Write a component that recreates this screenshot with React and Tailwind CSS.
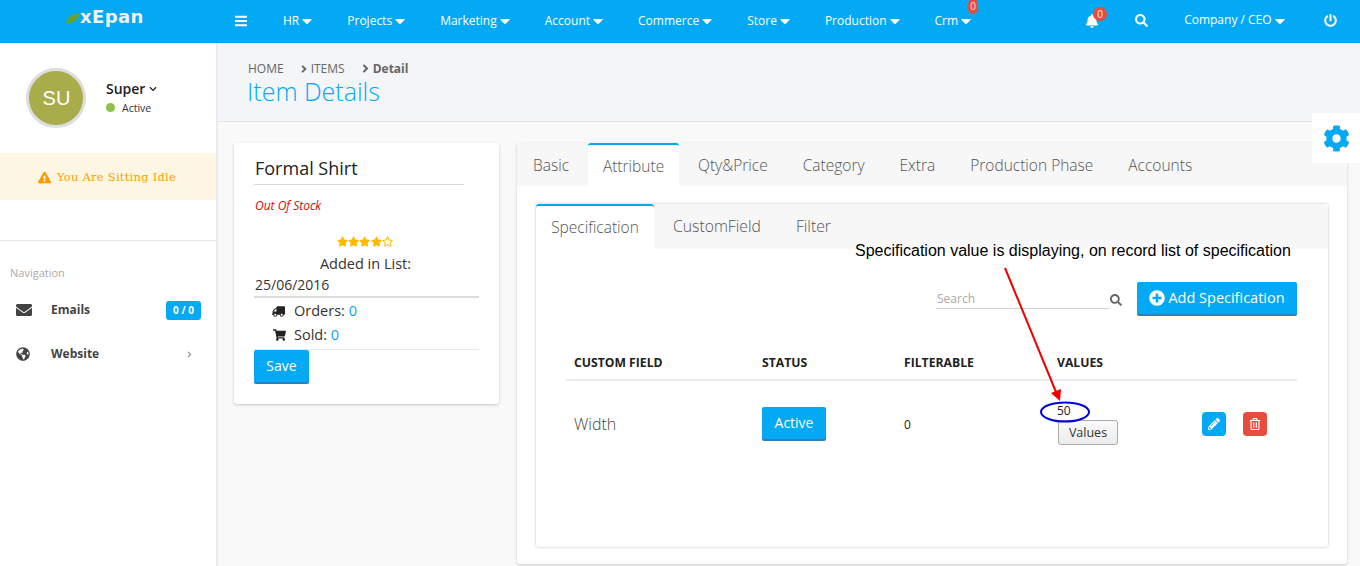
import React from 'react';
import {
  FaBars, FaCaretDown, FaBell, FaSearch, FaPowerOff, FaCog, FaExclamationTriangle,
  FaEnvelope, FaGlobeAmericas, FaTruck, FaShoppingCart, FaPencilAlt, FaRegTrashAlt,
  FaPlusCircle, FaStar, FaRegStar, FaChevronDown, FaChevronRight, FaAngleRight,
} from 'react-icons/fa';

const NAV = ['HR', 'Projects', 'Marketing', 'Account', 'Commerce', 'Store', 'Production'];
const TABS = ['Basic', 'Attribute', 'Qty&Price', 'Category', 'Extra', 'Production Phase', 'Accounts'];
const SUB_TABS = ['Specification', 'CustomField', 'Filter'];

function NavItem({ label, badge }) {
  return (
    <div className="relative flex items-center gap-[3px]">
      <span>{label}</span>
      <FaCaretDown className="text-[16px] w-[10px] shrink-0" />
      {badge && (
        <span className="absolute -top-[13px] -right-[7px] w-[10px] h-[15px] rounded-[5px] bg-[#e74c3c] text-[10px] leading-[15px] text-center text-white/80">
          {badge}
        </span>
      )}
    </div>
  );
}

function Header() {
  return (
    <header className="h-[43px] pb-[2px] bg-[#03a9f4] text-white flex items-center text-[12px] shrink-0">
      <div className="w-[235px] pl-[66px] flex items-center shrink-0 -mt-[8px]">
        <svg width="14" height="11" viewBox="0 0 14 11" className="mt-[4px]">
          <path d="M0 11 C1 4 6 1 14 0 C13 6 8 10 0 11 Z" fill="#6aa32b" />
        </svg>
        <span className="text-[18px] font-bold tracking-[0.4px] text-[#f1f1f1] font-['DejaVu_Sans',sans-serif] leading-none">xEpan</span>
      </div>
      <FaBars className="text-[14px] w-[12px] mr-[36px] shrink-0" />
      <div className="flex items-center gap-[35px]">
        {NAV.map((n) => <NavItem key={n} label={n} />)}
        <NavItem label="Crm" badge="0" />
      </div>
      <div className="relative ml-[114px] shrink-0">
        <FaBell className="text-[14px]" />
        <span className="absolute -top-[7px] -right-[8px] w-[14px] h-[14px] rounded-full bg-[#e74c3c] text-[10px] leading-[14px] text-center text-white/90">0</span>
      </div>
      <FaSearch className="text-[13px] ml-[36px] shrink-0" />
      <span className="ml-[36px] -mt-[1px] whitespace-nowrap">Company / CEO</span>
      <FaCaretDown className="text-[16px] w-[10px] ml-[3px] shrink-0" />
      <FaPowerOff className="text-[13px] ml-[39px] shrink-0" />
    </header>
  );
}

function Sidebar() {
  return (
    <aside className="w-[218px] shrink-0 bg-white border-r-2 border-[#e8ebf0] flex flex-col">
      <div className="flex items-center pl-[26px] h-[110px]">
        <div className="w-[60px] h-[60px] pl-[1px] rounded-full bg-[#a9ac4a] border-[3px] border-[#dddddd] flex items-center justify-center text-white text-[20px] font-['Liberation_Sans',sans-serif]">SU</div>
        <div className="ml-[20px] -mt-[3px]">
          <div className="flex items-center gap-[4px] text-[14px] font-semibold text-[#222] leading-[20px]">
            Super <FaChevronDown className="text-[8px] mt-[1px]" />
          </div>
          <div className="flex items-center gap-[7px] text-[10.5px] text-[#333] mt-[2px] leading-[14px]">
            <span className="w-[9px] h-[9px] rounded-full bg-[#8bc34a]" /> Active
          </div>
        </div>
      </div>
      <div className="h-[47px] pr-[2px] pt-[2px] bg-[#fdf6e3] flex items-center justify-center gap-[6px] text-[#ffa000] text-[11.5px] tracking-[0.25px] font-['DejaVu_Serif',serif]">
        <FaExclamationTriangle className="text-[#ff9800] text-[13px]" />
        <span>You Are Sitting Idle</span>
      </div>
      <div className="mt-[40px] border-t border-[#e9e9e9] pt-[24px] px-[10px]">
        <div className="text-[11px] leading-[16px] text-[#aaaaaa]">Navigation</div>
        <div className="mt-[19px] flex items-center h-[20px] text-[12px] font-bold text-[#444]">
          <FaEnvelope className="ml-[6px] text-[16px] w-[16px]" />
          <span className="ml-[19px]">Emails</span>
          <span className="ml-auto mr-[5px] w-[35px] h-[19px] rounded-[3px] bg-[#03a9f4] text-white text-[10px] leading-[19px] text-center">0 / 0</span>
        </div>
        <div className="mt-[24px] flex items-center h-[20px] text-[12px] font-bold text-[#444]">
          <FaGlobeAmericas className="ml-[6px] text-[14px] w-[14px]" />
          <span className="ml-[21px]">Website</span>
          <FaChevronRight className="ml-auto mr-[13px] text-[7px] text-[#999]" />
        </div>
      </div>
    </aside>
  );
}

function ItemCard() {
  return (
    <div className="w-[265px] h-[261px] shrink-0 bg-white rounded-[3px] shadow-[0_1px_3px_rgba(0,0,0,0.2)] pl-[20px] pr-[20px] text-[#333]">
      <div className="pt-[12px] pb-[3px] w-[210px] border-b border-[#d8d8d8] text-[18px] leading-[26px] text-[#222] pl-[1px]">Formal Shirt</div>
      <div className="mt-[12px] pl-[1px] text-[12px] leading-[17px] italic text-[#f00000]">Out Of Stock</div>
      <div className="mt-[21px] flex justify-center h-[13px] items-center pr-[3px]">
        {[0, 1, 2, 3].map((i) => <FaStar key={i} className="text-[11.2px] text-[#ffb900]" />)}
        <FaRegStar className="text-[11.2px] text-[#ffb900]" />
      </div>
      <div className="text-center text-[14.5px] leading-[20px] mt-[6px] pr-[2px]">Added in List:</div>
      <div className="pl-[1px] text-[14px] leading-[21px] border-b-2 border-[#dddddd] pb-[1px]">25/06/2016</div>
      <div className="pl-[18px] pt-[2px] flex items-center h-[24px] text-[14.5px]">
        <FaTruck className="text-[13px] text-[#222] w-[13px] -scale-x-100" />
        <span className="ml-[9px]">Orders: <span className="text-[#03a9f4]">0</span></span>
      </div>
      <div className="pl-[19px] flex items-center h-[28px] text-[14.5px] border-b border-[#e8e8e8] pb-[1px]">
        <FaShoppingCart className="text-[12px] text-[#222] w-[13px]" />
        <span className="ml-[8px]">Sold: <span className="text-[#03a9f4]">0</span></span>
      </div>
      <button className="block h-[34px] w-[55px] pb-[2px] bg-[#03a9f4] text-white text-[14px] rounded-[2px] border-b-2 border-[#2a80b9]">Save</button>
    </div>
  );
}

function Table() {
  return (
    <table className="w-[731px] ml-[30px] mt-[29px] table-fixed text-[#222]">
      <thead>
        <tr className="border-b-2 border-[#e8ebf0] text-[12.2px] font-bold text-left">
          <th className="w-[188px] pl-[8px] pt-[2px] h-[35px]">CUSTOM FIELD</th>
          <th className="w-[142px] pl-[8px] pt-[2px]">STATUS</th>
          <th className="w-[153px] pl-[8px] pt-[2px]">FILTERABLE</th>
          <th className="w-[144px] pl-[8px] pt-[2px]">VALUES</th>
          <th />
        </tr>
      </thead>
      <tbody>
        <tr className="h-[87px]">
          <td className="pl-[8px] text-[16px] font-light text-[#444]">Width</td>
          <td className="pl-[8px]">
            <button className="h-[34px] w-[64px] pb-[2px] bg-[#03a9f4] text-white text-[14px] rounded-[2px] border-b-2 border-[#2a80b9]">Active</button>
          </td>
          <td className="pl-[8px] pt-[2px] text-[12px]">0</td>
          <td className="pl-[8px] text-[12px]">
            <div className="leading-[16px]">50</div>
            <button className="block h-[25px] w-[60px] pt-[1px] mt-[1px] ml-[1px] bg-linear-to-b from-[#fafafa] to-[#ececec] border border-[#aaaaaa] rounded-[3px] text-[12.5px] text-[#333]">Values</button>
          </td>
          <td>
            <div className="flex gap-[17px] pl-[9px]">
              <span className="w-[24px] h-[24px] rounded-[4px] bg-[#03a9f4] text-white flex items-center justify-center text-[12px]"><FaPencilAlt /></span>
              <span className="w-[24px] h-[24px] rounded-[4px] bg-[#e74c3c] text-white flex items-center justify-center text-[12px]"><FaRegTrashAlt /></span>
            </div>
          </td>
        </tr>
      </tbody>
    </table>
  );
}

function SpecPanel() {
  return (
    <div className="mx-[19px] mt-[18px] w-[792px] h-[343px] bg-white rounded-[3px] shadow-[0_0_3px_rgba(0,0,0,0.25)]">
      <div className="h-[45px] bg-[#f7f7f7] flex">
        {SUB_TABS.map((t, i) => (
          i === 0 ? (
            <div key={t} className="w-[118px] h-[45px] bg-white border-t-2 border-[#03a9f4] rounded-t-[3px] flex items-center justify-center text-[15.5px] font-light text-[#555]">{t}</div>
          ) : (
            <div key={t} className="ml-[19px] h-[45px] flex items-center text-[15.75px] font-light text-[#555] pr-[16px]">{t}</div>
          )
        ))}
      </div>
      <div className="flex items-start justify-end pr-[31px] pt-[33px]">
        <div className="w-[173px] h-[26px] mt-[1px] border-b border-[#d0d0d0] flex items-end pl-[1px] text-[12px] text-[#aaaaaa]">Search</div>
        <FaSearch className="ml-[1px] mt-[12px] text-[12px] text-[#666]" />
        <button className="ml-[15px] w-[160px] h-[34px] bg-[#03a9f4] text-white text-[14.5px] rounded-[2px] border-b-2 border-[#2a80b9] flex items-center justify-center gap-[3px]">
          <FaPlusCircle className="text-[16px]" /> <span className="-mt-[1px]">Add Specification</span>
        </button>
      </div>
      <Table />
    </div>
  );
}

function TabPanel() {
  return (
    <div className="w-[830px] h-[421px] shrink-0 ml-[18px] bg-white rounded-[3px] shadow-[0_1px_3px_rgba(0,0,0,0.2)]">
      <div className="h-[43px] bg-[#f7f7f7] flex rounded-t-[3px]">
        {TABS.map((t, i) => (
          i === 1 ? (
            <div key={t} className="w-[91px] ml-[19px] mr-[19px] h-[43px] pt-[2px] bg-white border-t-2 border-[#03a9f4] rounded-t-[3px] flex items-center justify-center text-[15.5px] font-light text-[#555]">{t}</div>
          ) : (
            <div key={t} className={`h-[43px] pt-[2px] flex items-center text-[15.5px] font-light text-[#555] ${i === 0 ? 'ml-[16px]' : 'mr-[35px]'}`}>{t}</div>
          )
        ))}
      </div>
      <SpecPanel />
    </div>
  );
}

function Annotation() {
  return (
    <>
      <div className="absolute left-[855px] top-[242px] text-[16px] leading-[18px] text-black whitespace-nowrap font-['Liberation_Sans',sans-serif]">
        Specification value is displaying, on record list of specification
      </div>
      <svg className="absolute left-0 top-0 pointer-events-none" width="1360" height="566">
        <line x1="1005" y1="268" x2="1056" y2="392" stroke="#f00000" strokeWidth="2" />
        <polygon points="1060,401 1051,393 1061,389" fill="#f00000" />
        <ellipse cx="1065" cy="412" rx="24" ry="9.5" fill="none" stroke="#0000e0" strokeWidth="2" />
      </svg>
    </>
  );
}

export default function App() {
  return (
    <div className="relative w-[1360px] h-[566px] overflow-hidden flex flex-col bg-[#f9f9f9] font-['Open_Sans',sans-serif]">
      <Header />
      <div className="flex flex-1 min-h-0">
        <Sidebar />
        <main className="flex-1 min-w-0">
          <div className="h-[79px] bg-[#f4f5f7] border-b border-[#e3e3e3] pl-[30px] pt-[18px]">
            <div className="flex items-center text-[12px] leading-[15px] text-[#666]">
              <span>HOME</span>
              <FaAngleRight className="ml-[14px] mr-[1px] text-[12px] shrink-0" />
              <span>ITEMS</span>
              <FaAngleRight className="ml-[14px] mr-[1px] text-[13px] shrink-0" />
              <span className="font-bold">Detail</span>
            </div>
            <div className="text-[25px] leading-[31px] font-light text-[#03a9f4] -ml-[1px]">Item Details</div>
          </div>
          <div className="flex pl-[16px] pt-[21px]">
            <ItemCard />
            <TabPanel />
          </div>
        </main>
      </div>
      <div className="absolute right-0 top-[113px] w-[48px] h-[50px] bg-white rounded-l-[3px] flex items-center justify-center">
        <FaCog className="text-[27px] text-[#03a9f4]" />
      </div>
      <Annotation />
    </div>
  );
}
